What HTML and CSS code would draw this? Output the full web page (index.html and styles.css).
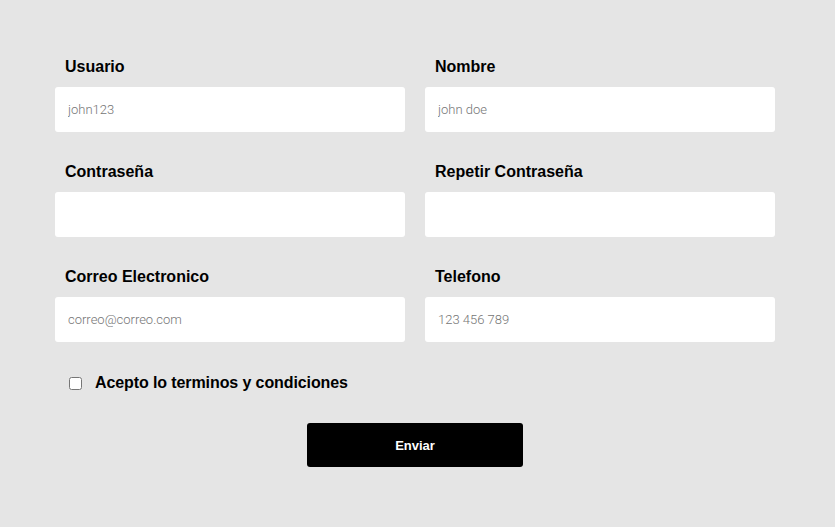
FILE: index.html
```html
<!DOCTYPE html>
<html lang="es">
<head>
<meta charset="utf-8">
<title>Registro</title>
<link rel="stylesheet" href="styles.css">
</head>
<body>
<form class="form">
  <div class="grid">
    <div class="field">
      <label class="label" for="u">Usuario</label>
      <input class="input" id="u" type="text" placeholder="john123">
    </div>
    <div class="field">
      <label class="label" for="n">Nombre</label>
      <input class="input" id="n" type="text" placeholder="john doe">
    </div>
    <div class="field">
      <label class="label" for="p">Contraseña</label>
      <input class="input" id="p" type="password">
    </div>
    <div class="field">
      <label class="label" for="p2">Repetir Contraseña</label>
      <input class="input" id="p2" type="password">
    </div>
    <div class="field">
      <label class="label" for="e">Correo Electronico</label>
      <input class="input" id="e" type="email" placeholder="correo@correo.com">
    </div>
    <div class="field">
      <label class="label" for="t">Telefono</label>
      <input class="input" id="t" type="tel" placeholder="123 456 789">
    </div>
  </div>
  <label class="terms"><input class="check" type="checkbox"><span>Acepto lo terminos y condiciones</span></label>
  <div class="actions">
    <button class="btn" type="button">Enviar</button>
  </div>
</form>
</body>
</html>
```

FILE: styles.css
```css
html, body {
  margin: 0;
  padding: 0;
  background: #e5e5e5;
}
body {
  font-family: "Liberation Sans", Arial, sans-serif;
}
.form {
  width: 720px;
  margin: 0 0 0 55px;
  padding-top: 58px;
}
.grid {
  display: grid;
  grid-template-columns: 350px 350px;
  column-gap: 20px;
  row-gap: 31px;
}
.field {
  display: flex;
  flex-direction: column;
}
.label {
  display: block;
  padding-left: 10px;
  font-size: 16px;
  line-height: 18px;
  font-weight: bold;
  color: #000;
  margin-bottom: 11px;
}
.input {
  box-sizing: border-box;
  width: 350px;
  height: 45px;
  margin: 0;
  border: none;
  border-radius: 3px;
  background: #fff;
  padding: 0 13px;
  font-family: Roboto, sans-serif;
  font-size: 13px;
  font-weight: 300;
  color: #333;
  outline: none;
}
.input::placeholder {
  color: #757575;
}
.terms {
  display: flex;
  align-items: center;
  margin-top: 32px;
  padding-left: 10px;
  height: 18px;
  font-size: 16px;
  line-height: 18px;
  font-weight: bold;
  letter-spacing: -0.1px;
  color: #000;
}
.check {
  width: 13px;
  height: 13px;
  margin: 0 13px 0 4px;
}
.actions {
  display: flex;
  justify-content: center;
  margin-top: 31px;
}
.btn {
  width: 216px;
  height: 44px;
  border: none;
  border-radius: 3px;
  background: #000;
  color: #fff;
  font-family: "Liberation Sans", Arial, sans-serif;
  font-size: 13px;
  font-weight: bold;
  padding-top: 2px;
  cursor: pointer;
}
```
